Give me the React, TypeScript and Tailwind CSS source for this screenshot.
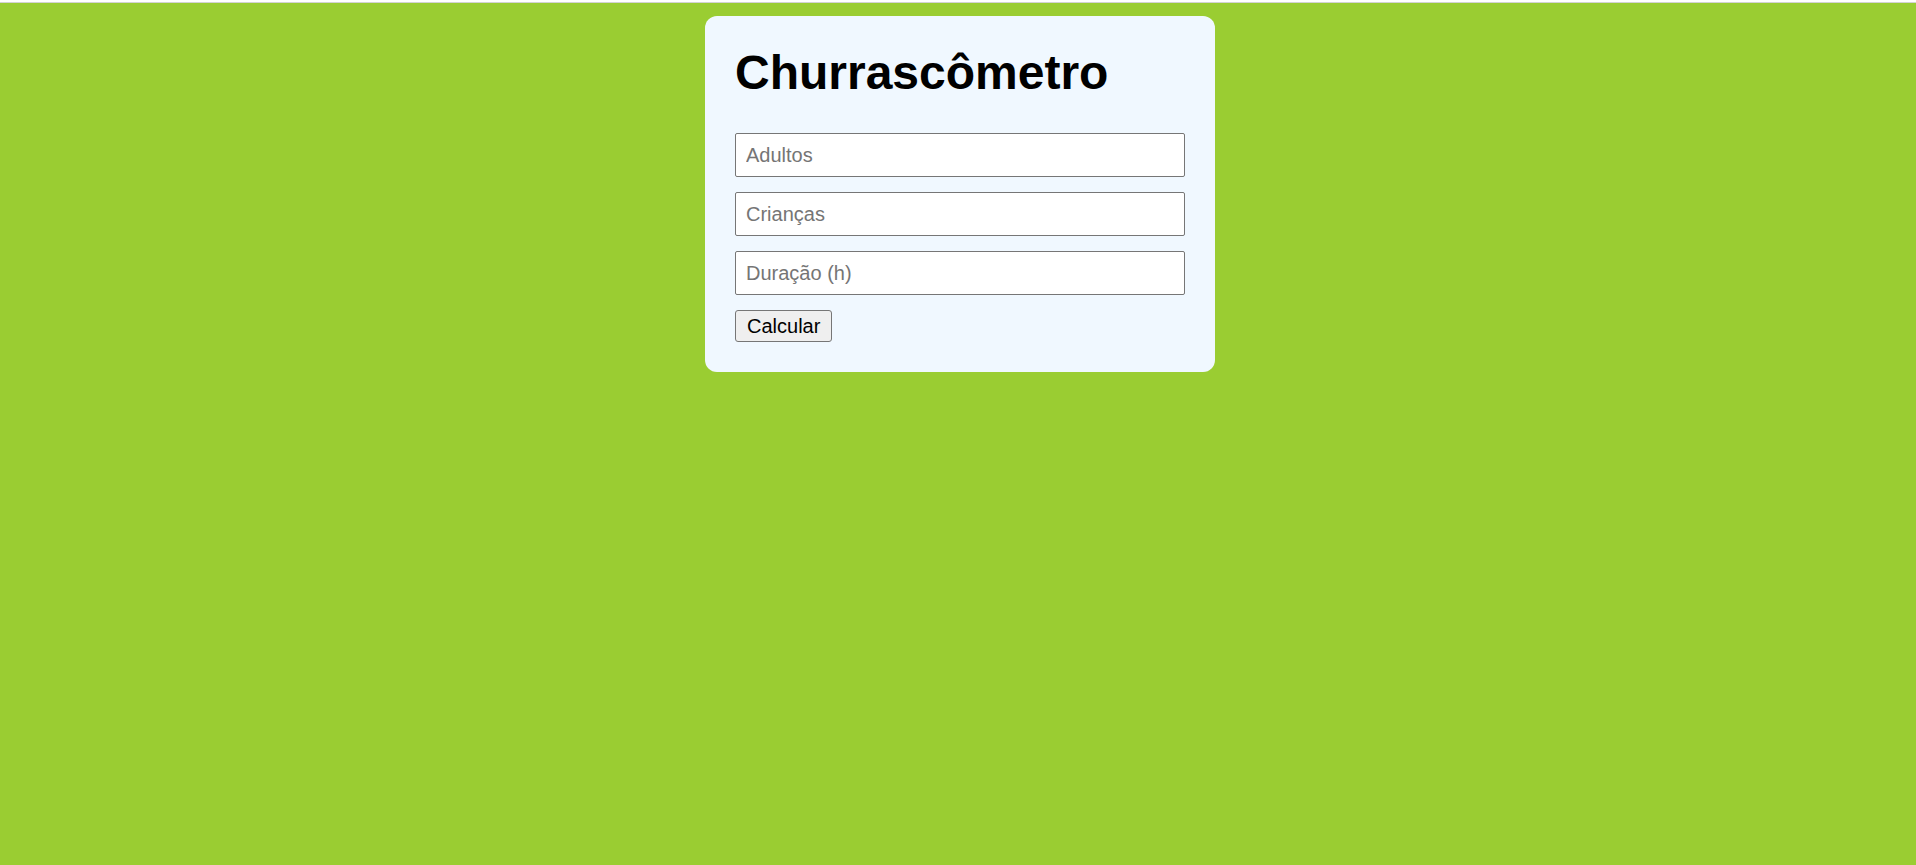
import React, { useState } from 'react';

const fields = [
  { key: 'adultos', placeholder: 'Adultos' },
  { key: 'criancas', placeholder: 'Crianças' },
  { key: 'duracao', placeholder: 'Duração (h)' },
];

export default function App() {
  const [values, setValues] = useState<Record<string, string>>({});

  return (
    <div className="min-h-screen w-full bg-[#9acd32] font-['Liberation_Sans',Arial,sans-serif]">
      <div className="h-[3px] w-full bg-white border-b border-[#d3d3d3]" />
      <div className="flex justify-center pl-[4px] pt-[13px]">
        <div className="w-[510px] rounded-[12px] bg-[#f0f8ff] px-[30px] pt-[30px] pb-[30px]">
          <h1 className="mb-[33px] text-[48px] font-bold leading-[54px] text-black">Churrascômetro</h1>

          {fields.map((f) => (
            <input
              key={f.key}
              type="number"
              placeholder={f.placeholder}
              value={values[f.key] ?? ''}
              onChange={(e) => setValues({ ...values, [f.key]: e.target.value })}
              className="mb-[15px] block h-[44px] w-full rounded-[2px] border border-[#767676] bg-white px-[10px] text-[20px] text-black outline-none placeholder:text-[#757575]"
            />
          ))}

          <button className="block h-[32px] rounded-[3px] border border-[#767676] bg-[#efefef] px-[11px] text-[20px] leading-none text-black">
            Calcular
          </button>
        </div>
      </div>
    </div>
  );
}
